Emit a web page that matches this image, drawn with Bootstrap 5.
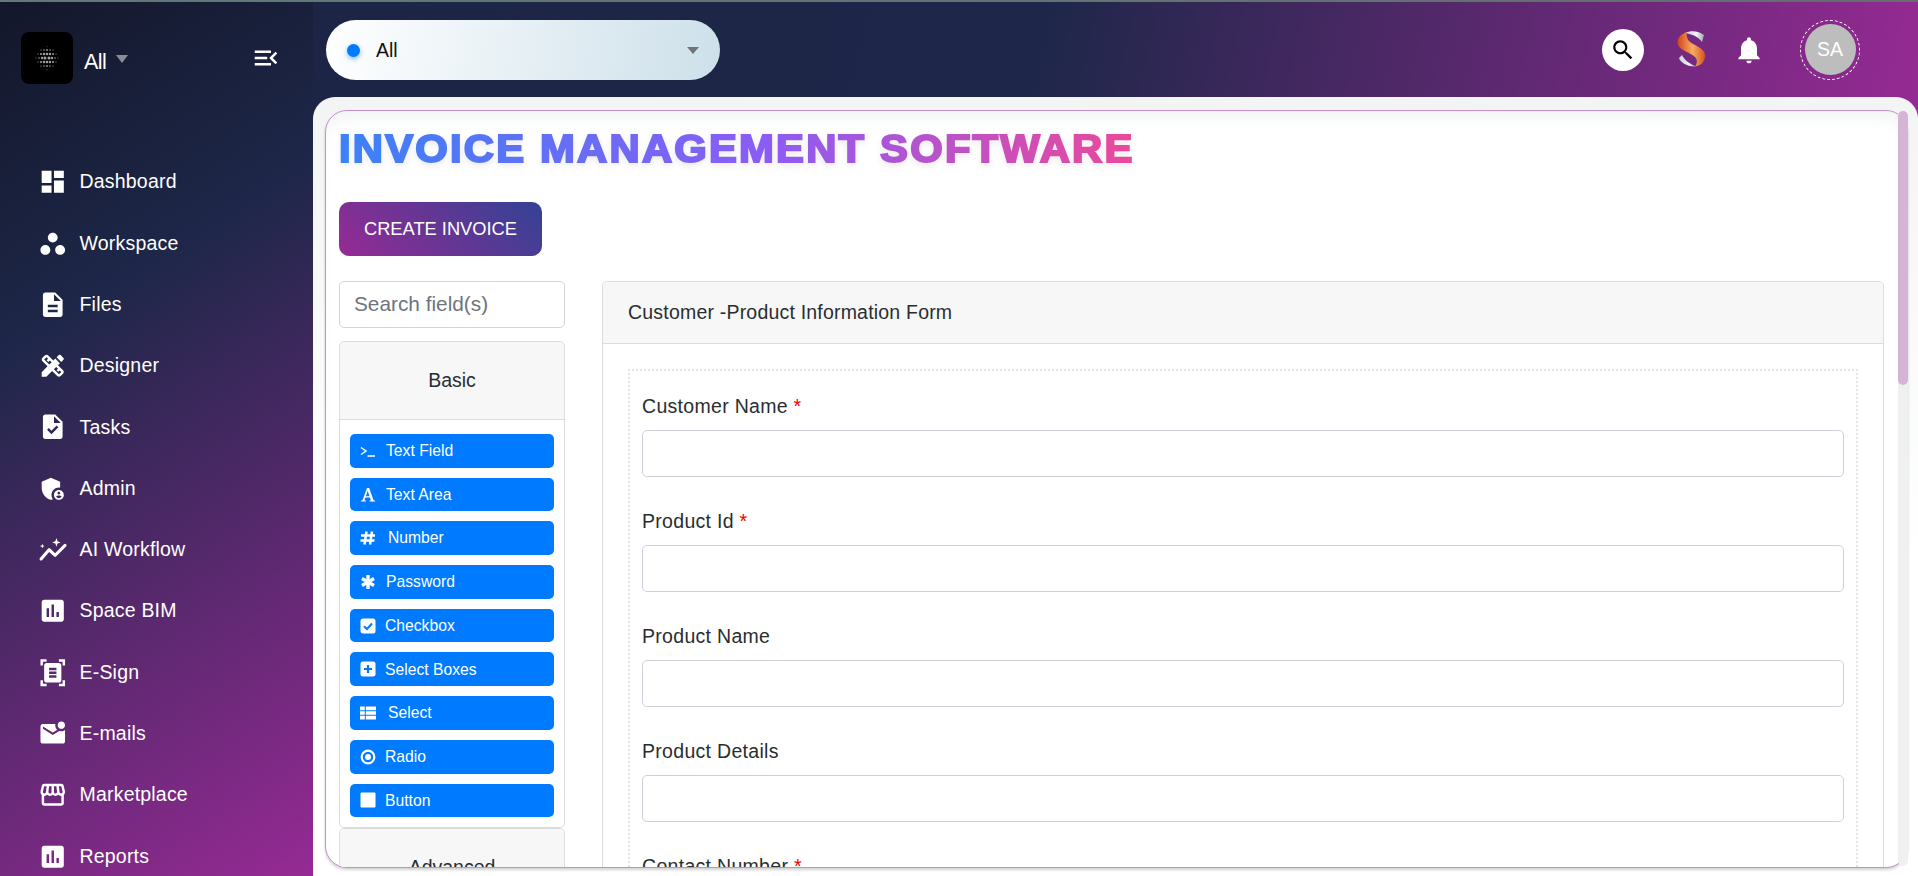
<!DOCTYPE html>
<html lang="en">
<head>
<meta charset="utf-8">
<title>Invoice Management Software</title>
<link rel="stylesheet" href="https://cdn.jsdelivr.net/npm/bootstrap@5.3.0/dist/css/bootstrap.min.css">
<style>
html,body{height:876px;overflow:hidden;margin:0;font-family:"Liberation Sans",Arial,sans-serif;color:#212529;background:#fff}
.topline{height:2px;background:linear-gradient(90deg,#5f7a78,#666c70)}
.shell{height:874px}
.side{width:313px;flex:none;overflow:hidden;background:linear-gradient(148deg,#13172a 0%,#1e2749 33%,#962a94 100%);color:#fff}
.brandrow{height:149.4px;flex:none;padding:30px 32px 0 21px}
.logobox{width:52px;height:52px;border-radius:8px;background:#000}
.brandname{font-size:21.5px;letter-spacing:-.6px;margin:4px 0 0 11px;line-height:1}
.caretdown{width:0;height:0;border-left:6.5px solid transparent;border-right:6.5px solid transparent;border-top:8px solid #8c8c94;margin:0 0 4px 10px}
.menubtn{margin-left:auto;margin-top:11px}
.sidelink{height:61.3px;flex:none;padding-left:38px;gap:12px;color:#fff;font-size:19.5px;text-decoration:none;letter-spacing:.2px}
.sidelink svg{width:29.5px;height:29.5px;flex:none;fill:#fff}
.mainpane{min-width:0;background:linear-gradient(103deg,#1c2545 0%,#1e2749 45%,#962a94 100%) no-repeat;background-size:100% 130px}
.topbar{height:95px;padding-left:13px;padding-right:58px}
.pill{width:394px;height:60px;border-radius:30px;background:linear-gradient(100deg,#fff 0%,#cde0ea 100%);padding:0 21px;margin-top:1px;font-size:19.5px;color:#111}
.pilltext{padding-top:2px}
.bluedot{width:13px;height:13px;border-radius:50%;background:#007bff;box-shadow:0 2px 5px rgba(0,123,255,.5);margin-right:16px}
.caretgrey{width:0;height:0;border-left:6px solid transparent;border-right:6px solid transparent;border-top:7px solid #6f7479;margin-left:auto}
.searchball{width:42px;height:42px;border-radius:50%;background:#fff;margin-right:33px}
.searchball svg{width:26px;height:26px}
.slogo{width:30px;height:37px;margin-right:26px}
.bellicon{width:32px;height:32px;fill:#fff;margin-right:35px}
.avatarring{width:60px;height:60px;border-radius:50%;border:1.5px dashed #fff;padding:3.5px}
.avatarcore{width:100%;height:100%;border-radius:50%;background:#bdbdbd;color:#fff;font-size:19.5px}
.panelwrap{height:779px;background:linear-gradient(180deg,#f3f5f5,#fff 60%);border-radius:22px 22px 0 0;padding:13px 10px 8px 12px}
.scrollframe{height:758px;border:1px solid #c48fcc;border-radius:22px;overflow:hidden;background:#fff;box-shadow:0 2px 3px rgba(0,0,0,.18),inset 0 14px 18px -8px #f0f2f2;padding:0 23px 0 13px}
.railtrack{position:absolute;top:14px;right:10.500px;width:10px;height:755px;background:#f0f0f0;border-radius:5px}
.railthumb{height:274px;background:#d6b4d6;border-radius:5px}
.scrollinner{padding-top:15px}
.bigtitle{font-family:"Liberation Sans",Arial,sans-serif;font-size:38px;font-weight:700;line-height:46px;letter-spacing:2px;margin:0;display:inline-block;white-space:nowrap;transform:scaleX(1.1);transform-origin:left center;background:linear-gradient(90deg,#3b82f6 0%,#8b5cf6 53%,#ec4899 100%);-webkit-background-clip:text;background-clip:text;color:transparent;-webkit-text-stroke:2px transparent;filter:drop-shadow(0 3px 3px rgba(0,0,0,.08))}
.createbtn{display:block;width:203px;height:54px;margin-top:30px;border:0;border-radius:10px;background:linear-gradient(45deg,#962a94 0%,#334295 100%);color:#fff;font-size:18.300px;padding:0}
.builder{margin-top:25px;gap:37px}
.palette{width:226px;flex:none}
.finder{height:47px;font-size:20.800px;border-radius:5px;padding:0 14px 2px;border-color:#d3d3dc}
.finder::placeholder{color:#6c757d}
.groupcard{border-color:#dcdcdc;border-radius:5px}
.groupcard .card-header{height:78px;background:#f7f7f7;border-color:#dcdcdc;font-size:19.5px;color:#2a2d30;padding:0}
.firstgroup{margin-top:13px}
.groupbody{padding:14px 10px 10px;gap:10px}
.fieldbtn{height:33.7px;background:#007bff;border:0;border-radius:5px;color:#fff;font-size:15.7px;padding:0 0 0 10px;gap:10px;text-align:left}
.fieldbtn .glyphbox{width:16px;flex:none;height:18px;line-height:18px;text-align:center}
.fieldbtn svg{width:16px;height:16px;display:block;margin:1px auto 0}
.shiftright{margin-left:2px}
.shiftleft{margin-left:-1px}
.formcard{flex:1 1 auto;min-width:0;border-color:#dcdcdc;border-radius:5px}
.formcard .card-header{height:62px;background:#f7f7f7;border-color:#dcdcdc;font-size:19.5px;letter-spacing:.2px;padding:0 0 0 25px;color:#2a2d30}
.formcard .card-body{padding:25px 25px 25px 25px}
.dropzone{border:2px dotted #e3e3e3;padding:23px 12px 0 12px}
.fieldlabel{display:block;font-size:19.5px;letter-spacing:.3px;line-height:24px;margin:0 0 12px;color:#2a2d30}
.reqstar{color:#e00}
.fieldinput{height:47px;border-color:#ced1da;border-radius:5px;margin-bottom:32px}
</style>
</head>
<body>
<div class="topline"></div>
<div class="shell d-flex">
  <aside class="side d-flex flex-column">
    <div class="brandrow d-flex align-items-start">
      <div class="logobox d-flex align-items-center justify-content-center">
        <svg width="26" height="26" viewBox="0 0 26 26" fill="#a0a0a0">
          <circle cx="13" cy="1.5" r=".5" opacity=".6"/>
          <circle cx="10" cy="5" r=".8"/><circle cx="13" cy="5" r=".9"/><circle cx="16" cy="5" r=".8"/><circle cx="7" cy="5" r=".6"/><circle cx="19" cy="5" r=".6"/>
          <circle cx="4" cy="9" r=".6"/><circle cx="7" cy="9" r="1"/><circle cx="10" cy="9" r="1.2"/><circle cx="13" cy="9" r="1.3"/><circle cx="16" cy="9" r="1.2"/><circle cx="19" cy="9" r="1"/><circle cx="22" cy="9" r=".6"/>
          <circle cx="2" cy="13" r=".5"/><circle cx="5" cy="13" r=".8"/><circle cx="8" cy="13" r="1.2"/><circle cx="11" cy="13" r="1.5"/><circle cx="15" cy="13" r="1.5"/><circle cx="18" cy="13" r="1.2"/><circle cx="21" cy="13" r=".8"/><circle cx="24" cy="13" r=".5"/>
          <circle cx="4" cy="17" r=".6"/><circle cx="7" cy="17" r="1"/><circle cx="10" cy="17" r="1.2"/><circle cx="13" cy="17" r="1.3"/><circle cx="16" cy="17" r="1.2"/><circle cx="19" cy="17" r="1"/><circle cx="22" cy="17" r=".6"/>
          <circle cx="7" cy="21" r=".6"/><circle cx="10" cy="21" r=".8"/><circle cx="13" cy="21" r=".9"/><circle cx="16" cy="21" r=".8"/><circle cx="19" cy="21" r=".6"/>
          <circle cx="13" cy="24.5" r=".5" opacity=".6"/>
        </svg>
      </div>
      <div class="d-flex align-items-center mt-3">
        <span class="brandname">All</span><span class="caretdown"></span>
      </div>
      <svg class="menubtn" width="30" height="30" viewBox="0 0 24 24" fill="#fff"><path d="M3 18h13v-2H3v2zm0-5h10v-2H3v2zm0-7v2h13V6H3zm18 9.59L17.42 12 21 8.41 19.59 7l-5 5 5 5L21 15.59z"/></svg>
    </div>
    <nav class="nav flex-column flex-nowrap">
      <a class="sidelink d-flex align-items-center" href="#"><svg viewBox="0 0 24 24"><path d="M3 13h8V3H3v10zm0 8h8v-6H3v6zm10 0h8V11h-8v10zm0-18v6h8V3h-8z"/></svg>Dashboard</a>
      <a class="sidelink d-flex align-items-center" href="#"><svg viewBox="0 0 24 24"><path d="M6 13c-2.2 0-4 1.8-4 4s1.8 4 4 4 4-1.8 4-4-1.8-4-4-4zm12 0c-2.2 0-4 1.8-4 4s1.8 4 4 4 4-1.8 4-4-1.8-4-4-4zm-6-10C9.8 3 8 4.8 8 7s1.8 4 4 4 4-1.8 4-4-1.8-4-4-4z"/></svg>Workspace</a>
      <a class="sidelink d-flex align-items-center" href="#"><svg viewBox="0 0 24 24"><path d="M14 2H6c-1.1 0-1.99.9-1.99 2L4 20c0 1.1.89 2 1.99 2H18c1.1 0 2-.9 2-2V8l-6-6zm2 16H8v-2h8v2zm0-4H8v-2h8v2zm-3-5V3.5L18.5 9H13z"/></svg>Files</a>
      <a class="sidelink d-flex align-items-center" href="#"><svg viewBox="0 0 24 24"><path d="M16.24 11.51l1.57-1.57-3.75-3.75-1.57 1.57-4.14-4.13c-.78-.78-2.05-.78-2.83 0l-1.9 1.9c-.78.78-.78 2.05 0 2.83l4.13 4.13L3 17.25V21h3.75l4.76-4.76 4.13 4.13c.95.95 2.23.6 2.83 0l1.9-1.9c.78-.78.78-2.05 0-2.83l-4.13-4.13zm-7.06-.44L5.04 6.94l1.89-1.9L8.2 6.31 7.02 7.5l1.41 1.41 1.19-1.19 1.45 1.45-1.89 1.9zm7.88 7.89l-4.13-4.14 1.9-1.9 1.45 1.45-1.19 1.19 1.41 1.41 1.19-1.19 1.27 1.27-1.9 1.91zm3.65-11.92c.39-.39.39-1.02 0-1.41l-2.34-2.34c-.47-.47-1.12-.29-1.41 0l-1.83 1.83 3.75 3.75 1.83-1.83z"/></svg>Designer</a>
      <a class="sidelink d-flex align-items-center" href="#"><svg viewBox="0 0 24 24"><path d="M14 2H6c-1.1 0-1.99.9-1.99 2L4 20c0 1.1.89 2 1.99 2H18c1.1 0 2-.9 2-2V8l-6-6zm-3.06 16L7.4 14.46l1.41-1.41 2.12 2.12 4.24-4.24 1.41 1.41L10.94 18zM13 9V3.5L18.5 9H13z"/></svg>Tasks</a>
      <a class="sidelink d-flex align-items-center" href="#"><svg viewBox="0 0 24 24"><path d="M17 11c.34 0 .67.04 1 .09V6.27L10.5 3 3 6.27v4.91c0 4.54 3.2 8.79 7.5 9.82.55-.13 1.08-.32 1.6-.55-.69-.98-1.1-2.17-1.1-3.45 0-3.31 2.69-6 6-6z"/><path d="M17 13c-2.21 0-4 1.79-4 4s1.79 4 4 4 4-1.79 4-4-1.79-4-4-4zm0 1.38c.62 0 1.12.51 1.12 1.12s-.51 1.12-1.12 1.12-1.12-.51-1.12-1.12.5-1.12 1.12-1.12zm0 5.37c-.93 0-1.74-.46-2.24-1.17.05-.72 1.51-1.08 2.24-1.08s2.19.36 2.24 1.08c-.5.71-1.31 1.17-2.24 1.17z"/></svg>Admin</a>
      <a class="sidelink d-flex align-items-center" href="#"><svg viewBox="0 0 24 24"><polyline points="2.5,19.5 9,12 14,16.5 22,8.5" fill="none" stroke="#fff" stroke-width="2.5" stroke-linecap="round" stroke-linejoin="round"/><path d="M15 2.5l.9 2.6 2.6.9-2.6.9-.9 2.6-.9-2.6-2.6-.9 2.6-.9zM3.5 7l.5 1.5 1.5.5-1.5.5-.5 1.5-.5-1.5L1.5 9 3 8.500z"/></svg>AI Workflow</a>
      <a class="sidelink d-flex align-items-center" href="#"><svg viewBox="0 0 24 24"><path d="M19 3H5c-1.1 0-2 .9-2 2v14c0 1.1.9 2 2 2h14c1.1 0 2-.9 2-2V5c0-1.100-.9-2-2-2zM9 17H7v-7h2v7zm4 0h-2V7h2v10zm4 0h-2v-4h2v4z"/></svg>Space BIM</a>
      <a class="sidelink d-flex align-items-center" href="#"><svg viewBox="0 0 24 24"><path fill-rule="evenodd" d="M7 3H4v3H2V1h5v2zm15 3V1h-5v2h3v3h2zM7 21H4v-3H2v5h5v-2zm13-3v3h-3v2h5v-5h-2zM19 18c0 1.100-.9 2-2 2H7c-1.100 0-2-.9-2-2V6c0-1.100.9-2 2-2h10c1.100 0 2 .9 2 2v12zM15 8H9v2h6V8zm0 3H9v2h6v-2zm0 3H9v2h6v-2z"/></svg>E-Sign</a>
      <a class="sidelink d-flex align-items-center" href="#"><svg viewBox="0 0 24 24"><path d="M22 8.98V18c0 1.100-.9 2-2 2H4c-1.100 0-2-.9-2-2V6c0-1.100.9-2 2-2h10.100c-.06.32-.1.66-.1 1 0 1.480.65 2.790 1.670 3.710L12 11 4 6v2l8 5 5.300-3.320c.54.2 1.100.32 1.700.32 1.130 0 2.160-.39 3-1.020zM16 5c0 1.660 1.340 3 3 3s3-1.340 3-3-1.340-3-3-3-3 1.340-3 3z"/></svg>E-mails</a>
      <a class="sidelink d-flex align-items-center" href="#"><svg viewBox="0 0 24 24"><path d="M21.9 8.89l-1.05-4.37c-.22-.9-1-1.52-1.91-1.52H5.05c-.9 0-1.69.63-1.9 1.52L2.1 8.89c-.24 1.02-.02 2.06.62 2.88.08.11.19.19.28.29V19c0 1.100.9 2 2 2h14c1.100 0 2-.9 2-2v-6.940c.09-.09.2-.18.28-.28.64-.82.87-1.870.62-2.890zm-2.990-3.900l1.050 4.370c.1.42.01.84-.25 1.170-.14.18-.44.47-.94.47-.61 0-1.140-.49-1.210-1.140L16.980 5l1.930-.01zM13 5h1.960l.54 4.520c.05.39-.07.78-.33 1.070-.22.26-.54.41-.95.41-.67 0-1.220-.59-1.220-1.310V5zM8.490 9.520L9.040 5H11v4.690c0 .72-.55 1.310-1.290 1.310-.34 0-.65-.15-.89-.41-.25-.29-.37-.68-.33-1.070zm-4.450-.16L5.050 5h1.970l-.58 4.860c-.08.65-.6 1.140-1.210 1.140-.49 0-.8-.29-.93-.47-.27-.32-.36-.75-.26-1.170zM5 19v-6.030c.08.01.15.03.23.03.87 0 1.660-.36 2.240-.95.6.6 1.400.95 2.310.95.87 0 1.650-.36 2.230-.93.59.57 1.390.93 2.290.93.84 0 1.640-.35 2.240-.95.58.59 1.370.95 2.240.95.08 0 .15-.02.23-.03V19H5z"/></svg>Marketplace</a>
      <a class="sidelink d-flex align-items-center" href="#"><svg viewBox="0 0 24 24"><path d="M19 3H5c-1.100 0-2 .9-2 2v14c0 1.100.9 2 2 2h14c1.100 0 2-.9 2-2V5c0-1.100-.9-2-2-2zM9 17H7v-7h2v7zm4 0h-2V7h2v10zm4 0h-2v-4h2v4z"/></svg>Reports</a>
    </nav>
  </aside>

  <main class="mainpane flex-grow-1 d-flex flex-column">
    <header class="topbar d-flex align-items-center">
      <div class="pill d-flex align-items-center"><span class="bluedot"></span><span class="pilltext">All</span><span class="caretgrey"></span></div>
      <div class="ms-auto d-flex align-items-center">
        <div class="searchball d-flex align-items-center justify-content-center"><svg viewBox="0 0 24 24" fill="#000"><path d="M15.5 14h-.79l-.28-.27C15.41 12.59 16 11.11 16 9.500 16 5.910 13.090 3 9.500 3S3 5.910 3 9.500 5.910 16 9.500 16c1.610 0 3.090-.59 4.230-1.570l.27.28v.79l5 4.990L20.490 19l-4.990-5zm-6 0C7.010 14 5 11.990 5 9.500S7.010 5 9.500 5 14 7.010 14 9.500 11.990 14 9.500 14z"/></svg></div>
        <svg class="slogo" viewBox="0 0 30 37">
          <defs>
            <linearGradient id="sorange" x1="0" y1="0" x2="1" y2="0"><stop offset="0" stop-color="#d2431a"/><stop offset=".55" stop-color="#f9ac62"/><stop offset="1" stop-color="#d4511f"/></linearGradient>
            <linearGradient id="ssilver" x1="0" y1="0" x2="1" y2="0"><stop offset="0" stop-color="#c9d0d8"/><stop offset=".6" stop-color="#f2f4f6"/><stop offset="1" stop-color="#9aa6b2"/></linearGradient>
          </defs>
          <path d="M8 2C14-1 22 0 27 4L25 11C22 6 15 3 8 2Z" fill="url(#ssilver)"/>
          <path d="M2 27C3 31 10 36 19 35.500C13 33 7 29 5 24Z" fill="url(#ssilver)"/>
          <path d="M10 1C3 3-1 9 1 14C3 19 14 22 18 26C21 29 20 33 18 35.500C25 35 29 29 28 23C27 17 16 14 12 10C10 8 9 4 10 1Z" fill="url(#sorange)"/>
        </svg>
        <svg class="bellicon" viewBox="0 0 24 24"><path d="M12 22c1.100 0 2-.9 2-2h-4c0 1.100.89 2 2 2zm6-6v-5c0-3.070-1.640-5.640-4.500-6.320V4c0-.83-.67-1.500-1.500-1.500s-1.500.67-1.500 1.500v.68C7.630 5.360 6 7.920 6 11v5l-2 2v1h16v-1l-2-2z"/></svg>
        <div class="avatarring"><div class="avatarcore d-flex align-items-center justify-content-center">SA</div></div>
      </div>
    </header>

    <div class="panelwrap position-relative">
      <div class="scrollframe">
        <div class="scrollinner">
          <h1 class="bigtitle">INVOICE MANAGEMENT SOFTWARE</h1>
          <button class="btn createbtn" type="button">CREATE INVOICE</button>

          <div class="builder d-flex align-items-start">
            <div class="palette">
              <input class="form-control finder" type="text" placeholder="Search field(s)">
              <div class="card groupcard firstgroup">
                <div class="card-header d-flex align-items-center justify-content-center">Basic</div>
                <div class="card-body groupbody d-flex flex-column">
                  <button class="btn fieldbtn d-flex align-items-center" type="button"><span class="glyphbox"><svg viewBox="0 0 16 16" fill="none" stroke="#fff" stroke-width="1.500"><path d="M1 4.500 6 8 1 11.500M7.500 13H15"/></svg></span>Text Field</button>
                  <button class="btn fieldbtn d-flex align-items-center" type="button"><span class="glyphbox"><svg viewBox="0 0 16 16" fill="#fff"><path d="M7 1h2.200l4.300 12.200 1.500.4v1H9.600v-1l1.300-.4-.9-2.700H5.400l-.9 2.700 1.300.4v1H1v-1l1.500-.4zM7.700 4 5.900 9.200h3.600z"/></svg></span>Text Area</button>
                  <button class="btn fieldbtn d-flex align-items-center" type="button"><span class="glyphbox"><svg viewBox="0 0 16 16" fill="none" stroke="#fff" stroke-width="2.500"><path d="M6.500 1.500 4.500 14.500M12 1.500 10 14.500M1 5.500H15M.5 10.500H14.500"/></svg></span><span class="shiftright">Number</span></button>
                  <button class="btn fieldbtn d-flex align-items-center" type="button"><span class="glyphbox"><svg viewBox="0 0 16 16" fill="none" stroke="#fff" stroke-width="3.400"><path d="M8 1V15M2 4.500 14 11.500M14 4.500 2 11.500"/></svg></span>Password</button>
                  <button class="btn fieldbtn d-flex align-items-center" type="button"><span class="glyphbox"><svg viewBox="0 0 16 16"><rect x=".5" y=".5" width="15" height="15" rx="2.500" fill="#fff"/><path d="M4 8.200 7 11 12 5.500" fill="none" stroke="#007bff" stroke-width="2"/></svg></span><span class="shiftleft">Checkbox</span></button>
                  <button class="btn fieldbtn d-flex align-items-center" type="button"><span class="glyphbox"><svg viewBox="0 0 16 16"><rect x=".5" y=".5" width="15" height="15" rx="2.500" fill="#fff"/><path d="M8 4V12M4 8H12" fill="none" stroke="#007bff" stroke-width="2.200"/></svg></span><span class="shiftleft">Select Boxes</span></button>
                  <button class="btn fieldbtn d-flex align-items-center" type="button"><span class="glyphbox"><svg viewBox="0 0 16 16" fill="#fff"><path d="M0 1.500h4.800v3.700H0zM5.800 1.500H16v3.700H5.800zM0 6.200h4.800v3.600H0zM5.800 6.200H16v3.600H5.800zM0 10.800h4.800v3.700H0zM5.800 10.800H16v3.700H5.800z"/></svg></span><span class="shiftright">Select</span></button>
                  <button class="btn fieldbtn d-flex align-items-center" type="button"><span class="glyphbox"><svg viewBox="0 0 16 16"><circle cx="8" cy="8" r="6.300" fill="none" stroke="#fff" stroke-width="2.200"/><circle cx="8" cy="8" r="3" fill="#fff"/></svg></span><span class="shiftleft">Radio</span></button>
                  <button class="btn fieldbtn d-flex align-items-center" type="button"><span class="glyphbox"><svg viewBox="0 0 16 16"><rect x=".5" y=".5" width="15" height="15" rx="1" fill="#fff"/></svg></span><span class="shiftleft">Button</span></button>
                </div>
              </div>
              <div class="card groupcard">
                <div class="card-header d-flex align-items-center justify-content-center">Advanced</div>
              </div>
            </div>

            <div class="card formcard">
              <div class="card-header d-flex align-items-center">Customer -Product Information Form</div>
              <div class="card-body">
                <form class="dropzone">
                  <label class="fieldlabel">Customer Name <span class="reqstar">*</span></label>
                  <input class="form-control fieldinput" type="text">
                  <label class="fieldlabel">Product Id <span class="reqstar">*</span></label>
                  <input class="form-control fieldinput" type="text">
                  <label class="fieldlabel">Product Name</label>
                  <input class="form-control fieldinput" type="text">
                  <label class="fieldlabel">Product Details</label>
                  <input class="form-control fieldinput" type="text">
                  <label class="fieldlabel">Contact Number <span class="reqstar">*</span></label>
                  <input class="form-control fieldinput" type="text">
                </form>
              </div>
            </div>
          </div>
        </div>
      </div>
      <div class="railtrack"><div class="railthumb"></div></div>
    </div>
  </main>
</div>
<script src="https://cdn.jsdelivr.net/npm/bootstrap@5.3.0/dist/js/bootstrap.bundle.min.js"></script>
</body>
</html>
